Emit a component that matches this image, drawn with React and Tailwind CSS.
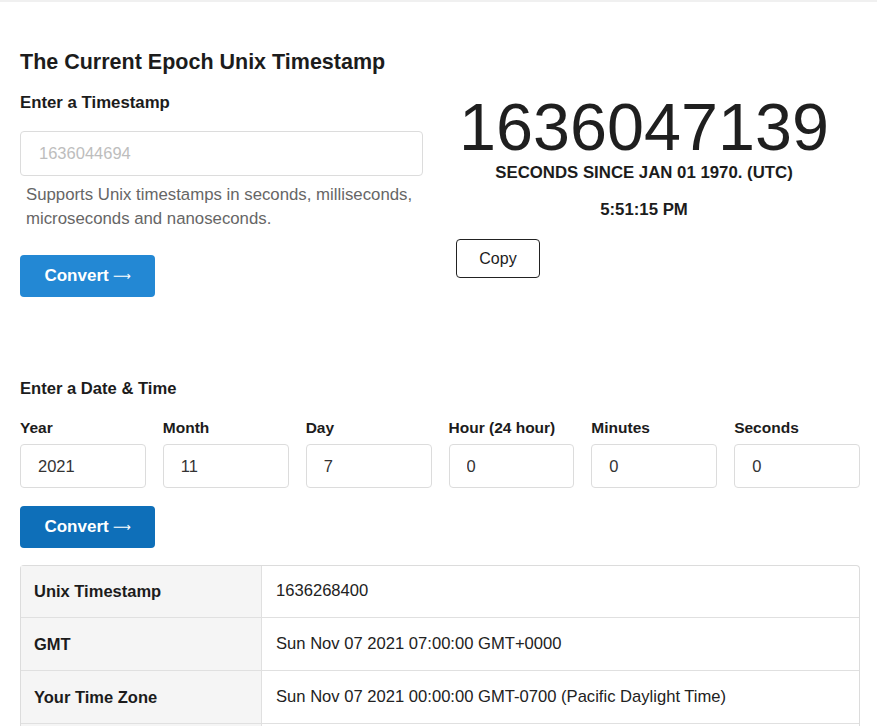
import React, { useState } from "react";

const fields = [
  { label: "Year", value: "2021" },
  { label: "Month", value: "11" },
  { label: "Day", value: "7" },
  { label: "Hour (24 hour)", value: "0" },
  { label: "Minutes", value: "0" },
  { label: "Seconds", value: "0" },
];

const rows = [
  { name: "Unix Timestamp", value: "1636268400" },
  { name: "GMT", value: "Sun Nov 07 2021 07:00:00 GMT+0000" },
  { name: "Your Time Zone", value: "Sun Nov 07 2021 00:00:00 GMT-0700 (Pacific Daylight Time)" },
  { name: "Relative", value: "3 days from now" },
];

function ConvertButton({ className }) {
  return (
    <button className={`h-[42px] w-[135px] rounded text-white text-[17px] font-bold flex items-center justify-center ${className}`}>
      Convert
      <span className="ml-[4px] font-normal font-['DejaVu_Sans',sans-serif] text-[12.5px] leading-none">⟶</span>
    </button>
  );
}

export default function App() {
  const [stamp, setStamp] = useState("");
  const [dateParts, setDateParts] = useState(fields.map((f) => f.value));

  return (
    <div className="min-h-screen bg-white border-t-2 border-[#f0f0f0] text-[#1c1c1c] font-['Liberation_Sans',Arial,sans-serif]">
      <div className="w-[840px] ml-5 pb-10">
        {/* Current timestamp */}
        <h1 className="mt-[47px] text-[21.5px] leading-[26px] font-bold">The Current Epoch Unix Timestamp</h1>

        <div className="mt-[18px] flex">
          <div className="w-[403px] shrink-0">
            <h3 className="text-[16.8px] leading-5 font-bold">Enter a Timestamp</h3>
            <input
              value={stamp}
              onChange={(e) => setStamp(e.target.value)}
              placeholder="1636044694"
              className="mt-[18px] block w-full h-[45px] px-[18px] text-[16.5px] border border-[#dcdcdc] rounded placeholder:text-[#bdbdbd] outline-none"
            />
            <p className="mt-[7px] ml-[6px] text-[16.8px] leading-6 text-[#666]">
              Supports Unix timestamps in seconds, milliseconds, microseconds and nanoseconds.
            </p>
            <ConvertButton className="mt-[24px] bg-[#2388d4]" />
          </div>

          <div className="flex-1 pl-[33px] pr-[28px]">
            <div className="text-center text-[66.5px] leading-[64px] pt-[2px] text-[#1f1f1f]">1636047139</div>
            <div className="mt-[5px] text-center text-[16.8px] leading-[18px] font-bold">
              SECONDS SINCE JAN 01 1970. (UTC)
            </div>
            <div className="mt-[19px] text-center text-[16.8px] leading-[18px] font-bold">5:51:15 PM</div>
            <button className="mt-[20px] h-[39px] w-[84px] rounded border border-[#222] text-[16px]">Copy</button>
          </div>
        </div>

        {/* Date & time */}
        <h3 className="mt-[82px] text-[16.6px] leading-5 font-bold">Enter a Date &amp; Time</h3>
        <div className="mt-[19px] grid grid-cols-6 gap-x-[17px]">
          {fields.map((f, i) => (
            <div key={f.label}>
              <label className="block text-[15.5px] leading-5 font-bold">{f.label}</label>
              <input
                value={dateParts[i]}
                onChange={(e) => {
                  const next = [...dateParts];
                  next[i] = e.target.value;
                  setDateParts(next);
                }}
                className="mt-[6px] block w-full h-[44px] px-[17px] text-[16.5px] text-[#333] border border-[#dcdcdc] rounded outline-none"
              />
            </div>
          ))}
        </div>
        <ConvertButton className="mt-[18px] bg-[#0e6fb9]" />

        <div className="mt-[17px] border-t border-x border-[#dcdcdc] rounded-t">
          {rows.map((r, i) => (
            <div key={r.name} className={`flex border-b border-[#e0e0e0] ${i === 0 ? "h-[52px]" : "h-[53px]"}`}>
              <div className="w-[241px] shrink-0 flex items-center px-[13px] bg-[#f5f5f5] border-r border-[#e0e0e0] text-[16.5px] font-bold">
                {r.name}
              </div>
              <div className="flex-1 flex items-center px-[14px] text-[16.6px] text-[#222]">{r.value}</div>
            </div>
          ))}
        </div>
      </div>
    </div>
  );
}
